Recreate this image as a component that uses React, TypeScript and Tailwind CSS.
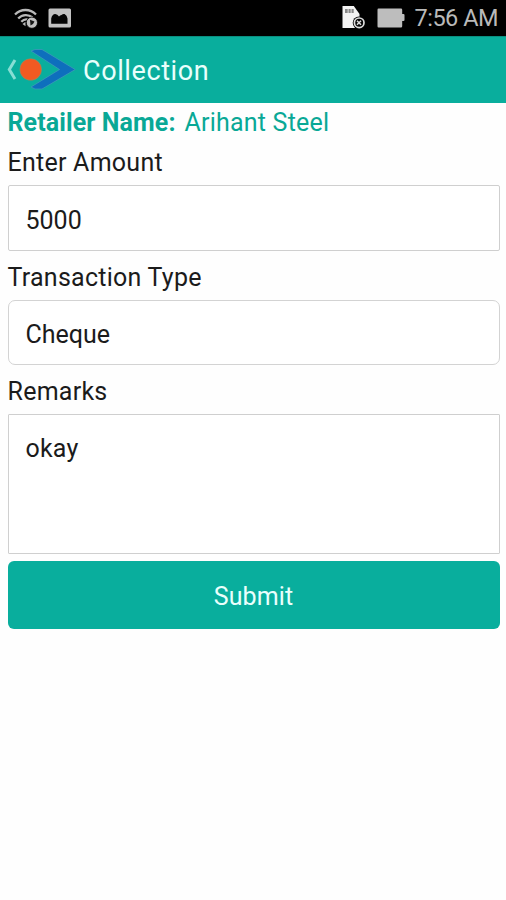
import type { ReactNode } from "react";

function StatusBar() {
  return (
    <div className="flex h-9 items-center bg-black pl-[14px] pr-[8px] text-[#b9b9b9]">
      <svg width="24" height="22" viewBox="0 0 24 22">
        <g fill="none" stroke="#b9b9b9" strokeWidth="2.3">
          <path d="M1 7.500C7 1.500 16 1.500 22 7.500" />
          <path d="M4.200 11.500C8.500 7.100 14.500 7.100 18.500 10.500" />
          <path d="M7.300 14.800C9.500 12.500 11.500 12 13.500 12.500" />
        </g>
        <path d="M8.500 17L11.500 14.800v4.500z" fill="#b9b9b9" />
        <circle cx="17.900" cy="15.700" r="5.600" fill="#c0c0c0" stroke="#000" strokeWidth="0.800" />
        <path d="M16 12.800l4.500 1.700-1.500 2.500-2.500 1.500z" fill="#171717" />
      </svg>
      <svg width="24" height="20" viewBox="0 0 24 20" className="ml-[10px]">
        <rect x="0.500" y="0.500" width="22.500" height="19" rx="1.500" fill="#c2c2c2" />
        <path d="M3.200 15.800V10.500q1-4.500 4-4.500 2.300 0 3.800 2.500 1-1.500 2.500-1.500 1.500-1.500 3-1 2.500 1 3 4.500v5.300z" fill="#050505" />
      </svg>
      <div className="flex-1" />
      <svg width="25" height="25" viewBox="0 0 25 25" className="mr-[11px] mt-[-1px]">
        <path d="M1.500 1h11.300l5.700 8v14h-17z" fill="#f3f3f3" />
        <path d="M4 4h2.700v4H4zM7.500 4h2.200v4H7.500zM10.500 4h2.200v4h-2.200z" fill="#888" />
        <circle cx="18" cy="17.800" r="6.300" fill="#050505" />
        <circle cx="18.200" cy="17.800" r="4.800" fill="none" stroke="#ddd" strokeWidth="1.700" />
        <path d="M16 15.800l4 4M20 15.800l-4 4" stroke="#ddd" strokeWidth="1.500" />
      </svg>
      <svg width="28" height="20" viewBox="0 0 28 20" className="mr-[10px]">
        <path d="M1.500.5h22.500q1.200 0 1.200 1.200V6h1.300q1 0 1 1v5q0 1-1 1h-1.300v5.300q0 1.200-1.200 1.200H1.500Q.5 19.500.5 18.300V1.700Q.5.5 1.500.5z" fill="#bdbdbd" />
      </svg>
      <span className="text-[23.5px] leading-9 tracking-[-0.5px]">7:56 AM</span>
    </div>
  );
}

function Header() {
  return (
    <header className="flex h-[67px] items-center border-t border-[#0b8f80] bg-[#09ae9d] pl-[6px]">
      <svg width="70" height="44" viewBox="0 0 70 44">
        <path d="M9 12L3.300 21.500l5.700 9.500" fill="none" stroke="#86ded4" strokeWidth="3" />
        <path d="M25 3l4-1.500h7L69.200 21.500 36 41h-7l-4-2L53.500 21.500z" fill="#0e6fbd" stroke="#3b9bb8" strokeWidth="0.800" />
        <circle cx="24.700" cy="21.500" r="10.800" fill="#f15a22" stroke="#8a9268" strokeWidth="0.600" />
      </svg>
      <h1 className="ml-[7px] pt-[2px] text-[27px] leading-8 tracking-[0.6px] text-[#e9fffc]">Collection</h1>
    </header>
  );
}

function Field({ label, children }: { label: string; children: ReactNode }) {
  return (
    <label className="block">
      <span className="flex h-[49px] items-center pt-[5px] leading-8 tracking-[0.25px]">{label}</span>
      {children}
    </label>
  );
}

export default function App() {
  return (
    <div className="min-h-[900px] w-[506px] bg-[#fefefe] font-[Roboto,sans-serif] text-[25px] text-[#1b1b1b]">
      <StatusBar />
      <Header />
      <main className="flex flex-col pl-[7.5px] pr-[6.5px]">
        <p className="h-[33px] leading-[39px] text-[#09a896]">
          <b className="font-bold tracking-[0.1px]">Retailer Name:</b>
          <span className="ml-[9px] tracking-[0.2px]">Arihant Steel</span>
        </p>
        <Field label="Enter Amount">
          <input
            defaultValue="5000"
            className="block h-[66px] w-full rounded-[2px] border-[1.5px] border-[#cfcfcf] bg-white px-[17px] pt-1 outline-none"
          />
        </Field>
        <Field label="Transaction Type">
          <button className="block h-[65px] w-full rounded-[7px] border-[1.5px] border-[#d3d3d3] bg-white px-[17px] pt-[4px] text-left">
            Cheque
          </button>
        </Field>
        <Field label="Remarks">
          <textarea
            defaultValue="okay"
            className="block h-[140px] w-full resize-none rounded-[1px] border-[1.5px] border-[#cfcfcf] bg-white px-[17px] pt-[18px] leading-8 tracking-[0.2px] outline-none"
          />
        </Field>
        <button className="mt-[7px] h-[68px] rounded-[6px] bg-[#09ae9d] pt-[4px] tracking-[0.1px] text-[#e9fffc]">Submit</button>
      </main>
    </div>
  );
}
